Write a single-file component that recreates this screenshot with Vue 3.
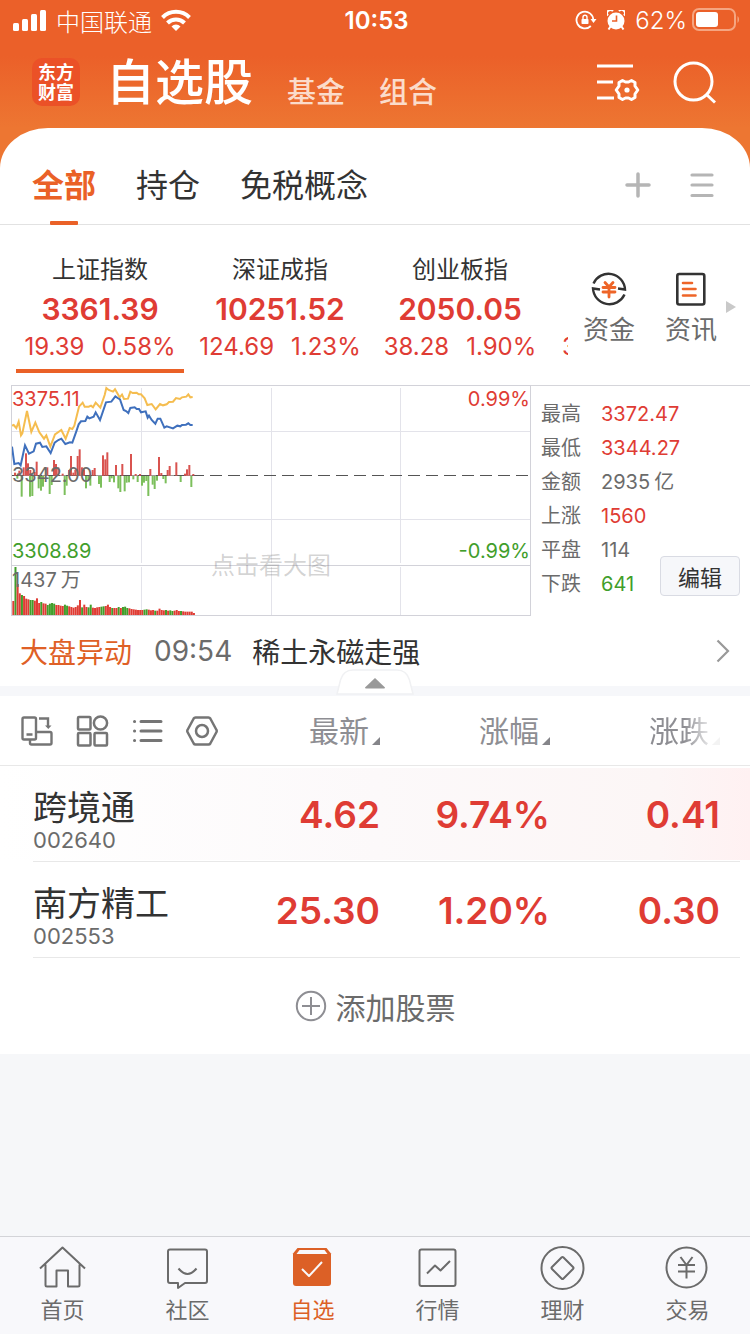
<script setup>
const indices = [
  { name: '上证指数', value: '3361.39', change: '19.39', percent: '0.58%', active: true },
  { name: '深证成指', value: '10251.52', change: '124.69', percent: '1.23%' },
  { name: '创业板指', value: '2050.05', change: '38.28', percent: '1.90%' }
]

const stats = [
  { label: '最高', value: '3372.47', tone: 'up' },
  { label: '最低', value: '3344.27', tone: 'up' },
  { label: '金额', value: '2935', unit: '亿', tone: 'flat' },
  { label: '上涨', value: '1560', tone: 'up' },
  { label: '平盘', value: '114', tone: 'flat' },
  { label: '下跌', value: '641', tone: 'down' }
]

const columns = ['最新', '涨幅', '涨跌']

const stocks = [
  { name: '跨境通', code: '002640', price: '4.62', percent: '9.74%', change: '0.41', hot: true },
  { name: '南方精工', code: '002553', price: '25.30', percent: '1.20%', change: '0.30' }
]

const nav = [
  { id: 'home', label: '首页' },
  { id: 'talk', label: '社区' },
  { id: 'watch', label: '自选', active: true },
  { id: 'market', label: '行情' },
  { id: 'wealth', label: '理财' },
  { id: 'trade', label: '交易' }
]

/* Chart series are stored in thirds of a pixel, the unit of the chart's viewBox. */
const averageLine = '36,137 41,135 49,144 56,125 63,166 67,160 81,93 94,156 106,128 118,157 132,176 139,166 151,200 165,163 184,150 197,176 209,144 217,147 223,137 237,80 248,68 254,80 266,80 273,77 279,82 287,68 301,83 314,45 319,24 326,30 339,35 345,28 359,52 366,44 372,57 384,56 391,35 398,39 410,38 416,43 423,43 434,55 442,75 455,72 467,88 480,72 489,76 500,73 507,66 519,65 528,54 540,57 546,52 559,50 565,43 571,52 578,51'
const priceLine = '36,200 43,252 56,249 62,256 75,196 87,221 101,214 108,191 120,188 127,201 139,199 152,219 164,188 175,180 184,176 196,192 210,187 217,188 229,154 236,133 243,124 256,123 262,110 268,115 281,110 287,97 300,120 318,67 334,65 346,49 353,54 360,58 371,90 378,93 385,99 391,84 404,82 410,87 417,87 423,97 437,94 443,113 447,107 455,120 466,131 473,116 481,116 493,143 500,139 519,145 532,137 541,139 546,135 558,134 565,130 571,135 578,135'

const rising = [[45, 278], [58, 272], [71, 262], [78, 220], [84, 250], [91, 270], [104, 276], [110, 245], [142, 262], [162, 240], [168, 252], [175, 262], [188, 281], [207, 270], [213, 228], [220, 278], [226, 270], [233, 228], [239, 208], [246, 262], [252, 268], [278, 270], [284, 264], [309, 226], [316, 238], [322, 217], [348, 255], [367, 252], [393, 222], [407, 282], [420, 282], [451, 267], [477, 231], [484, 279], [503, 270], [509, 258], [529, 247], [555, 281], [561, 268], [568, 255], [580, 282]]
const falling = [[52, 296], [65, 350], [90, 350], [97, 348], [116, 325], [123, 332], [129, 320], [149, 342], [155, 315], [194, 345], [200, 317], [258, 325], [265, 300], [271, 317], [297, 312], [303, 323], [329, 306], [335, 295], [342, 307], [355, 325], [361, 336], [374, 334], [380, 308], [387, 307], [400, 298], [413, 306], [426, 317], [432, 308], [439, 303], [445, 348], [458, 314], [464, 327], [471, 302], [490, 297], [497, 310], [542, 306], [574, 321]]

const volumeTops = [663, 561, 612, 640, 645, 648, 656, 658, 660, 660, 662, 655, 669, 666, 670, 671, 675, 671, 669, 671, 675, 675, 677, 678, 674, 677, 679, 681, 683, 681, 676, 660, 682, 674, 681, 682, 674, 683, 684, 682, 681, 680, 679, 678, 674, 681, 684, 684, 684, 681, 684, 681, 680, 684, 685, 687, 688, 689, 690, 690, 690, 689, 688, 689, 691, 690, 692, 692, 686, 690, 691, 690, 692, 691, 693, 692, 690, 693, 693, 694, 695, 695, 695, 695, 699]
const volumeTones = 'rgrrgrrrggrrrgrrggggrrrrggrrrrrrgrrggrrrrggrrrgrrgrgggrrrrrrrggrrrgrrrrgrggrrrgrrrrrrgg'
const volumes = volumeTops.map((top, i) => ({ x: 37 + i * 6.45, top, tone: volumeTones[i] === 'r' ? 'bar-up' : 'bar-down' }))
</script>

<template>
  <div class="page">
    <div class="status">
      <div class="status-left">
        <svg width="34" height="22" viewBox="0 0 34 22" fill="#fff"><rect x="0" y="14" width="6" height="8" rx="1.5" /><rect x="9" y="10" width="6" height="12" rx="1.5" /><rect x="18" y="5" width="6" height="17" rx="1.5" /><rect x="27" y="1" width="6" height="21" rx="1.5" /></svg>
        <span>中国联通</span>
        <svg class="wifi" width="30" height="22" viewBox="0 0 30 22" fill="none" stroke="#fff" stroke-width="4"><path d="M1.5 8.5a19 19 0 0 1 27 0" /><path d="M6.5 14a12 12 0 0 1 17 0" /><path d="M15 22l-4.5-4.600a6.400 6.400 0 0 1 9 0z" fill="#fff" stroke="none" /></svg>
      </div>
      <strong class="clock">10:53</strong>
      <div class="status-right">
        <svg width="22" height="20" viewBox="0 0 22 20" fill="none" stroke="#fff" stroke-width="1.800"><path d="M18.300 10a8.400 8.400 0 1 0-2.500 6" /><path d="M15.500 9h6l-3 4z" fill="#fff" stroke="none" /><rect x="6.500" y="9" width="7" height="5" rx=".8" fill="#fff" stroke="none" /><path d="M8 9V7.200a2 2 0 0 1 4 0V9" stroke-width="1.400" /></svg>
        <svg width="18" height="20" viewBox="0 0 18 20"><circle cx="9" cy="11" r="8.500" fill="#fff" /><path d="M1 5.500A3 3 0 0 1 6 1M17 5.500A3 3 0 0 0 12 1M3.500 16.500L1.500 19.500M14.500 16.500l2 3" fill="none" stroke="#fff" stroke-width="2" /><path d="M9.500 5.500V11H5" fill="none" stroke="#eb6029" stroke-width="1.600" /></svg>
        <span>62%</span>
        <svg class="battery" width="48" height="24" viewBox="0 0 48 24"><rect x="1" y="1" width="42" height="21" rx="6" fill="none" stroke="#f5a581" stroke-width="2" /><rect x="4" y="4" width="22" height="15" rx="3" fill="#fff" /><path d="M45.500 8v7c2-1.500 2-5.500 0-7z" fill="#f5a581" /></svg>
      </div>
    </div>

    <header class="header">
      <div class="logo"><span>东方</span><span>财富</span></div>
      <h1>自选股</h1>
      <a href="#fund">基金</a>
      <a href="#group">组合</a>
      <div class="header-actions">
        <button type="button" aria-label="设置">
          <svg width="44" height="40" viewBox="0 0 44 40" fill="none" stroke="#fff" stroke-width="3"><path d="M1 3h36M1 19h16M1 35h17" /><path d="M26.500 17.500l3 1.500h3l3-1.500 3.500 2v3.500l2.800 4-2.800 4V34.500l-3.500 2-3-1.500h-3l-3 1.500-3.500-2V31l-2.800-4 2.800-4v-3.500z" stroke-linejoin="round" /><circle cx="31" cy="27" r="2.600" fill="#fff" stroke="none" /></svg>
        </button>
        <button type="button" aria-label="搜索">
          <svg width="44" height="44" viewBox="0 0 44 44" fill="none" stroke="#fff" stroke-width="3"><circle cx="20.500" cy="20.500" r="18.500" /><path d="M33 33l9 8.500" /></svg>
        </button>
      </div>
    </header>

    <main class="sheet">
      <nav class="tabs">
        <a href="#all" class="current">全部</a>
        <a href="#hold">持仓</a>
        <a href="#duty">免税概念</a>
        <div class="tab-actions">
          <button type="button" aria-label="新增分组"><svg width="26" height="26" viewBox="0 0 26 26" stroke="#b5b5b5" stroke-width="3.500" stroke-linecap="round"><path d="M13 2v22M2 13h22" /></svg></button>
          <button type="button" aria-label="分组管理"><svg width="24" height="26" viewBox="0 0 24 26" stroke="#b5b5b5" stroke-width="3.200" stroke-linecap="round"><path d="M2 3h20M2 13h20M2 23.500h20" /></svg></button>
        </div>
      </nav>

      <section class="overview">
        <div class="indices">
          <div v-for="item in indices" :key="item.name" class="index" :class="{ active: item.active }">
            <span class="index-name">{{ item.name }}</span>
            <strong>{{ item.value }}</strong>
            <span class="index-change"><span>{{ item.change }}</span><span>{{ item.percent }}</span></span>
          </div>
          <div class="index-next">3</div>
        </div>
        <div class="shortcuts">
          <a href="#funds">
            <svg width="36" height="36" viewBox="0 0 36 36" fill="none" stroke="#333" stroke-width="2.400"><path d="M2.500 12.500A16.500 16.500 0 0 1 34 18.500l-7-1M33.500 23.500A16.500 16.500 0 0 1 2 17.500l7 1" /><path d="M14 11.500l4 4.500 4-4.500M12 16.500h12M12 21h12M18 16v10" stroke="#ee6528" stroke-width="2.800" stroke-linecap="round" /></svg>
            <span>资金</span>
          </a>
          <a href="#news">
            <svg width="36" height="36" viewBox="0 0 36 36" fill="none" stroke="#333" stroke-width="2.600"><rect x="4.300" y="3" width="27" height="30.500" rx="2" /><path d="M10 12h9M10 18h12.500M10 24.500h12.500" stroke="#ee6528" stroke-linecap="round" /></svg>
            <span>资讯</span>
          </a>
          <i class="more"></i>
        </div>
      </section>

      <section class="board">
        <div class="chart">
          <svg class="plot" viewBox="33 15 1560 693" fill="none">
            <path d="M36 154.500H1593M36 418.500H1593M424.500 24V549M424.500 561V705M814.500 24V549M814.500 561V705M1201.500 24V549M1201.500 561V705" stroke="#e3e3ea" stroke-width="3" />
            <path d="M36 556.500H1593" stroke="#d2d2d9" stroke-width="3" />
            <path d="M36 286.500H580" stroke="#666" stroke-width="2" />
            <path d="M36 286.500H1590" stroke="#555" stroke-width="3" stroke-dasharray="36 18" />
            <rect v-for="[x, y] in rising" :key="'u' + x" :x="x - 3" :y="y" width="6" :height="287 - y" fill="#d9534f" />
            <rect v-for="[x, y] in falling" :key="'d' + x" :x="x - 3" y="288" width="6" :height="y - 288" fill="#7cbf5c" />
            <rect v-for="bar in volumes" :key="bar.x" :class="bar.tone" :x="bar.x" :y="bar.top" width="6" :height="705 - bar.top" />
            <polyline :points="averageLine" stroke="#f5bd4f" stroke-width="6" />
            <polyline :points="priceLine" stroke="#3f70bd" stroke-width="6" />
          </svg>
          <span class="tag top-left up">3375.11</span>
          <span class="tag top-right up">0.99%</span>
          <span class="tag middle">3342.00</span>
          <span class="tag low-left down">3308.89</span>
          <span class="tag low-right down">-0.99%</span>
          <span class="tag volume">1437<span class="unit">万</span></span>
          <span class="hint">点击看大图</span>
        </div>
        <div class="stats">
          <dl>
            <div v-for="s in stats" :key="s.label"><dt>{{ s.label }}</dt><dd :class="s.tone">{{ s.value }}<span v-if="s.unit" class="unit">{{ s.unit }}</span></dd></div>
          </dl>
          <button type="button" class="edit">编辑</button>
        </div>
      </section>

      <a href="#moves" class="bulletin">
        <span class="bulletin-kind">大盘异动</span>
        <time>09:54</time>
        <span class="bulletin-title">稀土永磁走强</span>
        <svg width="14" height="24" viewBox="0 0 14 24" fill="none" stroke="#999" stroke-width="2.200"><path d="M1.500 1.500L12 12 1.500 22.500" /></svg>
      </a>

      <div class="divider">
        <button type="button" aria-label="收起">
          <svg width="80" height="28" viewBox="0 0 80 28"><path d="M2 26L5.500 12Q8.500 2 18 2H62Q71.500 2 74.500 12L78 26z" fill="#fff" stroke="#f0f1f3" stroke-width="1.500" /><path d="M30 19.500L40 10 50 19.500q0 1-1 1H31q-1 0-1-1z" fill="#999" /></svg>
        </button>
      </div>

      <table class="quotes">
        <colgroup><col><col class="col-price"><col class="col-percent"><col class="col-change"></colgroup>
        <thead>
          <tr>
            <th>
              <div class="tools">
                <button type="button" aria-label="横屏">
                  <svg width="34" height="34" viewBox="0 0 34 34" fill="none" stroke="#757575" stroke-width="2.400"><rect x="2.500" y="3.500" width="13.500" height="22" rx="1.500" /><path d="M6.500 20.500h6M19 4.500h9V13M10 26v3q0 1.500 1.500 1.500H30q1.500 0 1.500-1.500V19.500q0-1.500-1.500-1.500H16.500" /><path d="M25 11.500h6.500L28.300 15z" fill="#757575" stroke="none" /></svg>
                </button>
                <button type="button" aria-label="宫格">
                  <svg width="34" height="34" viewBox="0 0 34 34" fill="none" stroke="#757575" stroke-width="2.500"><rect x="3" y="3" width="12.500" height="12.500" rx="1" /><circle cx="25.500" cy="9" r="6.600" /><rect x="3" y="19" width="12.500" height="12.500" rx="1" /><rect x="19.500" y="19" width="12.500" height="12.500" rx="1" /></svg>
                </button>
                <button type="button" aria-label="列表">
                  <svg width="34" height="34" viewBox="0 0 34 34" fill="none" stroke="#757575" stroke-width="3" stroke-linecap="round"><path d="M11 7.500h20M11 17h20M11 26.500h20M4.500 7.500h.1M4.500 17h.1M4.500 26.500h.1" /></svg>
                </button>
                <button type="button" aria-label="设置">
                  <svg width="34" height="34" viewBox="0 0 34 34" fill="none" stroke="#757575" stroke-width="2.500"><path d="M10.500 3.500h13q1.200 0 1.800 1L31.500 16q.6 1 0 2L25.300 29.500q-.6 1-1.800 1h-13q-1.200 0-1.800-1L2.500 18q-.6-1 0-2L8.700 4.500q.6-1 1.800-1z" /><circle cx="17" cy="17" r="6" /></svg>
                </button>
              </div>
            </th>
            <th v-for="c in columns" :key="c"><span class="sort">{{ c }}<i></i></span></th>
          </tr>
        </thead>
        <tbody>
          <tr v-for="s in stocks" :key="s.code" :class="{ hot: s.hot }">
            <td><span class="stock-name">{{ s.name }}</span><span class="stock-code">{{ s.code }}</span></td>
            <td>{{ s.price }}</td>
            <td>{{ s.percent }}</td>
            <td>{{ s.change }}</td>
          </tr>
        </tbody>
      </table>

      <button type="button" class="add">
        <svg width="32" height="32" viewBox="0 0 32 32" fill="none" stroke="#8e8e93" stroke-width="2"><circle cx="16" cy="16" r="14.200" /><path d="M7 16h18M16 7v18" /></svg>
        <span>添加股票</span>
      </button>
    </main>

    <nav class="bottom">
      <a v-for="n in nav" :key="n.id" :href="'#' + n.id" :class="{ chosen: n.active }">
        <svg width="48" height="48" viewBox="1 0 48 48" fill="none" stroke="#6b6b6b" stroke-width="2" stroke-linejoin="round">
          <path v-if="n.id === 'home'" d="M2 24.500L24.500 3.500 47 24.500M7.500 20.500V41q0 1.500 1.500 1.500h9.500v-16H30v16h10q1.500 0 1.500-1.500V20.500" />
          <template v-else-if="n.id === 'talk'"><path d="M7 5.500H42q2 0 2 2V37q0 2-2 2H22l-7 5V39H7q-2 0-2-2V7.500q0-2 2-2z" /><path d="M15.500 24.500q9 11 18 0" /></template>
          <template v-else-if="n.id === 'watch'"><path d="M9.500 4h29l4.500 5.500V39q0 3-3 3H8q-3 0-3-3V9.500z" fill="#dc6026" stroke="none" /><path d="M11.500 6h25l3 4H8.500z" fill="#f8f8fb" stroke="none" /><path d="M14 25l7 7 13-14" stroke="#f8f8fb" /></template>
          <template v-else-if="n.id === 'market'"><rect x="6.500" y="5.500" width="36" height="36.500" rx="2" /><path d="M14 29.500l8-8 5.500 5L37 17" /></template>
          <template v-else-if="n.id === 'wealth'"><circle cx="24.500" cy="24" r="21" /><path d="M23.500 13.500q1-1 2 0l9.500 9.500q1 1 0 2l-9.500 9.500q-1 1-2 0L14 25q-1-1 0-2z" /></template>
          <template v-else><circle cx="23.500" cy="23.500" r="20" /><path d="M17.500 13l6 8 6-8M15 21h17M15 27.500h17M23.500 21v13.500" /></template>
        </svg>
        <span>{{ n.label }}</span>
      </a>
    </nav>
  </div>
</template>

<style>
body {
  margin: 0;
  background: #f6f7f9;
}
</style>

<style scoped>
.page {
  min-height: 100vh;
  display: flex;
  flex-direction: column;
  background: linear-gradient(#eb6029 0, #eb6029 56px, #ed7632 128px, #ed7632 168px, #f6f7f9 168px);
  font-family: Inter, "Noto Sans CJK SC", sans-serif;
  font-weight: 400;
  color: #333;
}
a {
  color: inherit;
  text-decoration: none;
}
button {
  padding: 0;
  border: 0;
  background: none;
  font: inherit;
  color: inherit;
}
svg {
  display: block;
  flex: none;
}
.up { color: #df3c34; }
.down { color: #419e2b; }
.flat { color: #6b6b6b; }
.bar-up { fill: #df3c34; }
.bar-down { fill: #419e2b; }

.status {
  display: grid;
  grid-template-columns: 1fr auto 1fr;
  align-items: center;
  height: 40px;
  padding: 0 10px 0 13px;
  font-size: 24px;
  color: #fff;
}
.status-left,
.status-right {
  display: flex;
  align-items: center;
  gap: 9px;
  font-weight: 300;
}
.status-right {
  justify-content: flex-end;
  gap: 10px;
}
.battery { margin-left: -5px; }
.clock { font-weight: 600; }

.header {
  display: flex;
  align-items: center;
  height: 88px;
  padding: 0 33px 0 32px;
  color: #fff;
}
.logo {
  display: flex;
  flex-direction: column;
  align-items: center;
  justify-content: center;
  box-sizing: border-box;
  width: 48px;
  height: 48px;
  margin-top: -4px;
  padding-bottom: 2px;
  border-radius: 10px;
  background: #eb5127;
  font-family: "Noto Sans CJK SC", sans-serif;
  font-size: 18px;
  font-weight: 700;
  line-height: 20px;
}
h1 {
  margin: -2px 34px 0 26px;
  font-size: 49px;
  line-height: 64px;
  font-weight: 500;
}
.header > a {
  margin: 12px 34px 0 0;
  font-size: 29px;
  font-weight: 500;
  color: #fbdccb;
}
.header-actions {
  display: flex;
  gap: 33px;
  align-items: center;
  margin: -3px 0 0 auto;
}

.sheet {
  border-radius: 48px 48px 0 0 / 40px 40px 0 0;
  background: #fff;
}
.tabs {
  display: flex;
  align-items: center;
  gap: 40px;
  height: 96px;
  padding: 0 36px 0 32px;
  border-bottom: 1px solid #e2e2e2;
  font-size: 32px;
}
.tabs > a {
  box-sizing: border-box;
  height: 96px;
  padding-top: 34px;
  line-height: 48px;
}
.tabs .current {
  position: relative;
  font-weight: 700;
  color: #ea6127;
}
.current::after {
  content: "";
  position: absolute;
  left: calc(50% - 14px);
  bottom: -1px;
  width: 28px;
  height: 4px;
  border-radius: 1px;
  background: #ea6127;
}
.tab-actions {
  display: flex;
  gap: 39px;
  margin-left: auto;
  padding-top: 18px;
}

.overview {
  display: flex;
  height: 160px;
}
.indices {
  flex: 1;
  min-width: 0;
  display: flex;
  overflow: hidden;
  padding-left: 10px;
}
.index {
  position: relative;
  flex: 0 0 180px;
  display: flex;
  flex-direction: column;
  align-items: center;
  padding-top: 26px;
}
.index-name {
  font-size: 24px;
  line-height: 38px;
}
.index strong {
  font-size: 30px;
  font-weight: 600;
  line-height: 40px;
  color: #df3c34;
}
.index-change {
  display: flex;
  gap: 17px;
  font-size: 24px;
  line-height: 36px;
  color: #df3c34;
}
.index.active::after {
  content: "";
  position: absolute;
  left: 6px;
  right: 6px;
  bottom: 12px;
  height: 4px;
  background: #ea6127;
}
.index-next {
  flex: none;
  margin-left: 12px;
  padding-top: 104px;
  font-size: 24px;
  line-height: 36px;
  color: #df3c34;
}
.shortcuts {
  flex: 0 0 182px;
  display: flex;
  align-items: center;
}
.shortcuts a {
  display: flex;
  flex-direction: column;
  align-items: center;
  width: 82px;
  gap: 4px;
  padding-top: 10px;
  font-size: 26px;
  line-height: 38px;
  color: #6b6b6b;
}
.shortcuts svg { overflow: visible; }
.more {
  margin: 4px 0 0 -6px;
  border-left: 10px solid #c9c9c9;
  border-top: 6px solid transparent;
  border-bottom: 6px solid transparent;
}

.board {
  display: flex;
  margin-left: 11px;
  border-top: 1px solid #d5d5da;
}
.chart {
  position: relative;
  flex: 520 1 0;
  margin-top: -1px;
}
.plot {
  width: 100%;
  height: auto;
  box-sizing: border-box;
  outline: 1px solid #d2d2d9;
  outline-offset: -1px;
}
.tag {
  position: absolute;
  left: 1px;
  font-size: 20px;
  line-height: 26px;
}
.top-left { top: 1px; }
.top-right { top: 1px; left: auto; right: 1px; }
.middle { top: 77px; color: #6b6b6b; }
.low-left { top: 153px; }
.low-right { top: 153px; left: auto; right: 1px; }
.volume { top: 182px; color: #6b6b6b; }
.unit { margin-left: 4px; }
.hint {
  position: absolute;
  top: 163px;
  left: 0;
  right: 0;
  font-size: 24px;
  line-height: 36px;
  text-align: center;
  color: rgba(120, 120, 120, 0.32);
}
.stats {
  position: relative;
  flex: 219 1 0;
}
dl {
  margin: 0;
  padding: 11px 0 0 10px;
  font-size: 20px;
  line-height: 34px;
}
dl div { display: flex; }
dt {
  width: 60px;
  color: #6b6b6b;
}
dd { margin: 0; }
.edit {
  position: absolute;
  right: 10px;
  bottom: 20px;
  width: 80px;
  height: 40px;
  border: 1px solid #d9dbe3;
  border-radius: 4px;
  background: #f6f7fa;
  font-size: 22px;
}

.bulletin {
  display: flex;
  align-items: center;
  height: 70px;
  padding: 0 20px;
  font-size: 28px;
}
.bulletin-kind { color: #df6026; }
.bulletin time {
  margin: 0 20px 0 22px;
  color: #6b6b6b;
}
.bulletin svg { margin-left: auto; }

.divider {
  position: relative;
  height: 10px;
  background: #f6f7fa;
}
.divider button {
  position: absolute;
  left: calc(50% - 40px);
  bottom: 0;
}

.quotes {
  width: 100%;
  table-layout: fixed;
  border-collapse: collapse;
}
.col-price { width: 150px; }
.col-percent { width: 170px; }
.col-change { width: 200px; }
.quotes th,
.quotes td {
  box-sizing: border-box;
  padding: 0;
  text-align: right;
}
.quotes thead tr { background: linear-gradient(#e8e8e8, #e8e8e8) 0 100% / 100% 1px no-repeat; }
.quotes th {
  height: 70px;
  font-weight: 400;
  font-size: 30px;
  color: #8e8e93;
}
.quotes th:last-child,
.quotes td:last-child { padding-right: 30px; }
.tools {
  display: flex;
  gap: 21px;
  padding-left: 20px;
}
.sort {
  display: inline-flex;
  align-items: flex-end;
  gap: 3px;
  line-height: 44px;
}
.sort i {
  margin-bottom: 8px;
  border-left: 8px solid transparent;
  border-bottom: 8px solid #85858a;
}
th:last-child .sort {
  -webkit-mask-image: linear-gradient(to right, #000 50%, rgba(0, 0, 0, 0.1) 90%);
  mask-image: linear-gradient(to right, #000 50%, rgba(0, 0, 0, 0.1) 90%);
}
.quotes tbody tr { background: linear-gradient(#e8e8e8, #e8e8e8) 33px 100% / calc(100% - 43px) 1px no-repeat; }
.quotes tbody .hot {
  background:
    linear-gradient(#e8e8e8, #e8e8e8) 33px 100% / calc(100% - 43px) 1px no-repeat,
    linear-gradient(to right, #fff, #fcf9fa 50%, #fcf6f6 88%, #fff1f2) 0 2px / 100% 92px no-repeat;
}
.quotes td {
  height: 96px;
  white-space: nowrap;
  font-size: 37px;
  font-weight: 600;
  color: #df3c34;
}
.quotes td:first-child {
  padding: 14px 0 0 33px;
  text-align: left;
  font-weight: 400;
}
.stock-name {
  display: block;
  font-size: 34px;
  line-height: 38px;
  color: #333;
}
.stock-code {
  display: block;
  font-size: 22px;
  line-height: 26px;
  color: #6b6b6b;
}
.add {
  display: flex;
  align-items: center;
  justify-content: center;
  gap: 9px;
  width: 100%;
  height: 96px;
  font-size: 30px;
  color: #6b6b6b;
}

.bottom {
  display: flex;
  height: 97px;
  margin-top: auto;
  border-top: 1px solid #d3d4d8;
  background: #f8f8fb;
}
.bottom a {
  flex: 1;
  display: flex;
  flex-direction: column;
  align-items: center;
  padding-top: 7px;
  font-size: 22px;
  line-height: 36px;
  color: #6b6b6b;
}
.bottom .chosen { color: #dc6026; }
</style>
